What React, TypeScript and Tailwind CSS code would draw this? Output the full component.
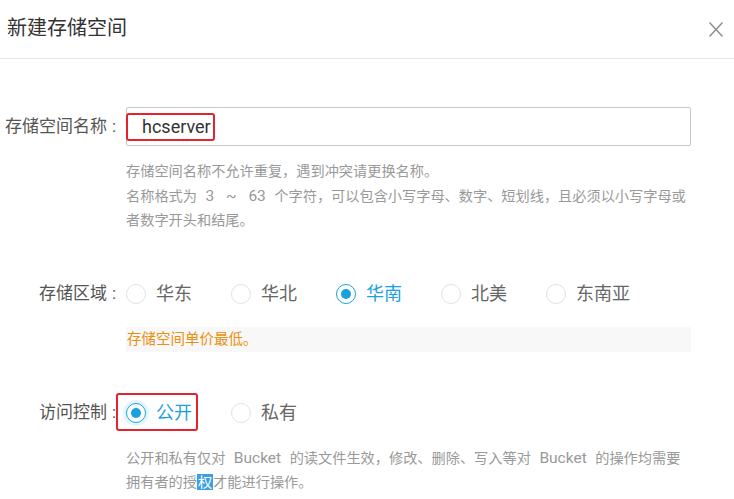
import React from 'react';

const font = "font-['Roboto','Noto_Sans_CJK_SC',sans-serif]";

interface RadioProps {
  label: string;
  checked?: boolean;
  halo?: boolean;
}

const Radio: React.FC<RadioProps> = ({ label, checked, halo }) => (
  <div className="flex items-center h-[26px]">
    <span
      className={`w-5 h-5 rounded-full border flex items-center justify-center shrink-0 ${
        checked ? 'border-[#17a2dd]' : 'border-[#e2e2e2]'
      } ${halo ? 'shadow-[0_0_0_3px_#e4f4fb]' : ''}`}
    >
      {checked && <span className="w-[10px] h-[10px] rounded-full bg-[#17a2dd]" />}
    </span>
    <span className={`ml-[10px] text-[18px] leading-[26px] ${checked ? 'text-[#1ba2dc]' : 'text-[#666]'}`}>{label}</span>
  </div>
);

const Label: React.FC<{ text: string }> = ({ text }) => (
  <div className="w-[119px] shrink-0 text-right text-[17px] text-[#555] whitespace-nowrap">
    {text}
    <span className="inline-block w-[12px] pl-[5px] text-left">:</span>
  </div>
);

const App: React.FC = () => {
  const regions = ['华东', '华北', '华南', '北美', '东南亚'];

  return (
    <div className={`w-[734px] h-[499px] bg-white overflow-hidden ${font}`}>
      <div className="flex items-center justify-between h-[59px] border-b border-[#e8e8e8] pl-[7px] pr-[10px]">
        <span className="text-[20px] text-[#333] mt-[-2px]">新建存储空间</span>
        <svg width="16" height="17" viewBox="0 0 16 17">
          <path d="M1.5 1.5 L14.5 15.5 M14.5 1.5 L1.5 15.5" stroke="#8f8f8f" strokeWidth="1.5" fill="none" />
        </svg>
      </div>

      <div className="flex items-center mt-[48px]">
        <Label text="存储空间名称" />
        <div className="relative ml-[7px] w-[565px] h-[39px] border border-[#c8c8c8] rounded-[2px] flex items-center pl-[15px] text-[18px] text-[#333]">
          hcserver
          <div className="absolute left-[-1px] top-[5px] w-[89px] h-[28px] border-2 border-[#e3232d] rounded-[3px]" />
        </div>
      </div>

      <div className="ml-[126px] mt-[13px] text-[14.2px] leading-[24.5px] text-[#999] whitespace-nowrap [word-spacing:5px]">
        <div>存储空间名称不允许重复，遇到冲突请更换名称。</div>
        <div>
          名称格式为 <span className="text-[15.5px] [word-spacing:8px]">3 ~ 63</span> 个字符，可以包含小写字母、数字、短划线，且必须以小写字母或
        </div>
        <div>者数字开头和结尾。</div>
      </div>

      <div className="flex items-center h-[40px] mt-[41px]">
        <Label text="存储区域" />
        <div className="ml-[7px] flex gap-[39px]">
          {regions.map((r) => (
            <Radio key={r} label={r} checked={r === '华南'} />
          ))}
        </div>
      </div>

      <div className="ml-[126px] mt-[13px] w-[565px] h-[25px] bg-[#f8f8f8] text-[14.5px] leading-[25px] text-[#ec8f0e] pl-[1px]">
        存储空间单价最低。
      </div>

      <div className="flex items-center h-[40px] mt-[41px]">
        <Label text="访问控制" />
        <div className="ml-[7px] flex gap-[39px]">
          <div className="relative">
            <Radio label="公开" checked halo />
            <div className="absolute left-[-10px] right-[-6px] top-[-7px] bottom-[-5px] border-2 border-[#e3232d] rounded-[3px]" />
          </div>
          <Radio label="私有" />
        </div>
      </div>

      <div className="ml-[126px] mt-[13px] text-[14.2px] leading-[24px] text-[#999] whitespace-nowrap [word-spacing:5px]">
        <div>
          公开和私有仅对 <span className="text-[15.5px]">Bucket</span> 的读文件生效，修改、删除、写入等对{' '}
          <span className="text-[15.5px]">Bucket</span> 的操作均需要
        </div>
        <div>
          拥有者的授<span className="bg-[#3a9fe3] text-white px-[1px]">权</span>才能进行操作。
        </div>
      </div>
    </div>
  );
};

export default App;
